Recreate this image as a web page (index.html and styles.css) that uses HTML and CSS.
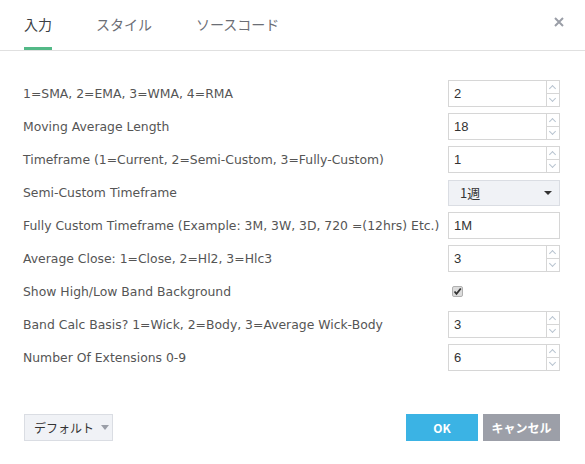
FILE: index.html
```html
<!DOCTYPE html>
<html>
<head>
<meta charset="utf-8">
<link rel="stylesheet" href="styles.css">
</head>
<body>
<div class="dialog">
  <div class="header">
    <div class="tabs">
      <div class="tab active">入力</div>
      <div class="tab">スタイル</div>
      <div class="tab">ソースコード</div>
    </div>
    <div class="close">
      <svg width="10" height="10" viewBox="0 0 10 10"><path d="M1 1L9 9M9 1L1 9" stroke="#9a9ea7" stroke-width="2"/></svg>
    </div>
  </div>
  <div class="content">
    <div class="row"><div class="label">1=SMA, 2=EMA, 3=WMA, 4=RMA</div><div class="num"><div class="val">2</div><div class="spin"><span class="up"></span><span class="down"></span></div></div></div>
    <div class="row"><div class="label">Moving Average Length</div><div class="num"><div class="val">18</div><div class="spin"><span class="up"></span><span class="down"></span></div></div></div>
    <div class="row"><div class="label">Timeframe (1=Current, 2=Semi-Custom, 3=Fully-Custom)</div><div class="num"><div class="val">1</div><div class="spin"><span class="up"></span><span class="down"></span></div></div></div>
    <div class="row"><div class="label">Semi-Custom Timeframe</div><div class="select"><span class="selval">1週</span><span class="caret"></span></div></div>
    <div class="row"><div class="label">Fully Custom Timeframe (Example: 3M, 3W, 3D, 720 =(12hrs) Etc.)</div><div class="num text"><div class="val">1M</div></div></div>
    <div class="row"><div class="label">Average Close: 1=Close, 2=Hl2, 3=Hlc3</div><div class="num"><div class="val">3</div><div class="spin"><span class="up"></span><span class="down"></span></div></div></div>
    <div class="row"><div class="label">Show High/Low Band Background</div><div class="checkwrap"><div class="check"><svg width="9" height="9" viewBox="0 0 9 9"><path d="M1.5 4.5L3.5 6.8L7.8 1.5" stroke="#333" stroke-width="1.8" fill="none"/></svg></div></div></div>
    <div class="row"><div class="label">Band Calc Basis? 1=Wick, 2=Body, 3=Average Wick-Body</div><div class="num"><div class="val">3</div><div class="spin"><span class="up"></span><span class="down"></span></div></div></div>
    <div class="row"><div class="label">Number Of Extensions 0-9</div><div class="num"><div class="val">6</div><div class="spin"><span class="up"></span><span class="down"></span></div></div></div>
  </div>
  <div class="footer">
    <div class="defaults">デフォルト<span class="dcaret"></span></div>
    <div class="actions">
      <div class="btn ok">OK</div>
      <div class="btn cancel">キャンセル</div>
    </div>
  </div>
</div>
</body>
</html>
```
FILE: styles.css
```css
html, body { margin: 0; padding: 0; background: #fff; }
.dialog {
  width: 585px; height: 464px; box-sizing: border-box;
  font-family: "DejaVu Sans", "Noto Sans CJK JP", sans-serif;
  color: #555;
  display: flex; flex-direction: column;
}
.header {
  height: 51px; box-sizing: border-box;
  border-bottom: 1px solid #e0e0e0;
  display: flex; align-items: stretch; justify-content: space-between;
  padding: 0 21px 0 24px;
}
.tabs { display: flex; gap: 44px; }
.tab {
  font-family: "Noto Sans CJK JP", sans-serif;
  font-size: 14px; color: #6b6e75;
  padding-top: 14px; box-sizing: border-box;
}
.tab.active { color: #3c3f45; border-bottom: 3px solid #53b987; }
.close { padding-top: 17px; }
.close svg { display: block; }
.content { padding: 29px 25px 0 23px; display: flex; flex-direction: column; gap: 6px; }
.row { display: flex; align-items: center; justify-content: space-between; height: 27px; }
.label { font-size: 12.4px; color: #555; white-space: nowrap; }
.num {
  width: 112px; height: 27px; box-sizing: border-box;
  border: 1px solid #d6d6d6; display: flex; background: #fff;
}
.val {
  flex: 1; font-family: "Liberation Sans", sans-serif; font-size: 13px; color: #333;
  padding-left: 5px; line-height: 25px;
}
.spin { width: 12px; border-left: 1px solid #d6d6d6; display: flex; flex-direction: column; }
.spin span { flex: 1; position: relative; }
.spin .down { border-top: 1px solid #d6d6d6; }
.spin span::before {
  content: ""; position: absolute; left: 3px; width: 4px; height: 4px;
  border-left: 1px solid #b8c4d0; border-top: 1px solid #b8c4d0;
}
.spin .up::before { top: 5px; transform: rotate(45deg); }
.spin .down::before { top: 2px; transform: rotate(225deg); }
.select {
  width: 112px; height: 26px; box-sizing: border-box;
  border: 1px solid #dadde3; background: #f0f2f6;
  display: flex; align-items: center; justify-content: space-between;
  padding: 0 7px 0 11px;
}
.selval { font-family: "Noto Sans CJK JP", sans-serif; font-size: 13px; color: #333; }
.caret { width: 0; height: 0; border-left: 4px solid transparent; border-right: 4px solid transparent; border-top: 4px solid #333; }
.checkwrap { width: 112px; display: flex; }
.check {
  margin-left: 4px; width: 11px; height: 11px; box-sizing: border-box;
  border: 1px solid #b0b0b0; border-radius: 2px; background: #dcdcdc;
  display: flex; align-items: center; justify-content: center;
}
.footer {
  margin-top: auto; height: 27px; box-sizing: border-box;
  display: flex; justify-content: space-between; align-items: flex-start;
  padding: 0 25px 0 24px; margin-bottom: 23px;
}
.defaults {
  width: 89px; height: 27px; box-sizing: border-box;
  border: 1px solid #dadde3; background: #f0f2f6;
  font-family: "Noto Sans CJK JP", sans-serif; font-size: 12px; color: #333;
  display: flex; align-items: center; padding-left: 9px; gap: 7px;
}
.dcaret { width: 0; height: 0; border-left: 4px solid transparent; border-right: 4px solid transparent; border-top: 5px solid #9a9ea7; }
.actions { display: flex; gap: 5px; }
.btn {
  height: 27px; display: flex; align-items: center; justify-content: center;
  color: #fff; font-weight: bold; font-size: 12px;
  font-family: "Noto Sans CJK JP", sans-serif;
}
.ok { width: 72px; background: #3bb3e4; }
.cancel { width: 77px; background: #9c9fa8; }
```
